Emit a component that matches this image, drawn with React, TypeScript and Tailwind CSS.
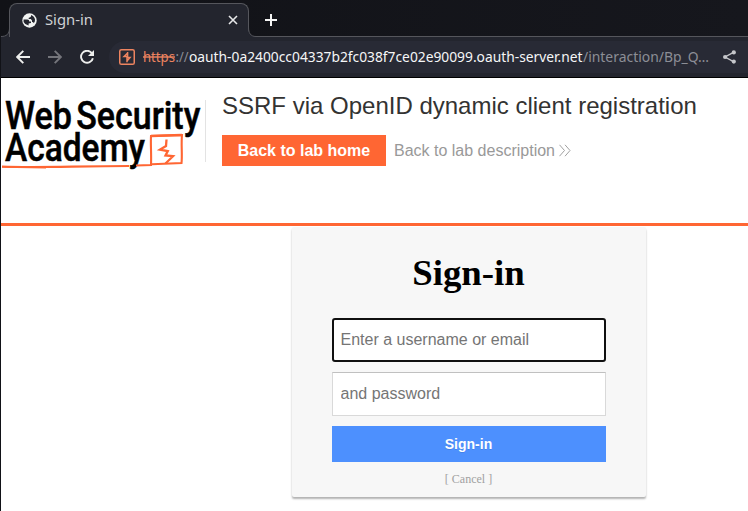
function TabStrip() {
  return (
    <div className="flex h-[37px] bg-linear-to-r from-[#111217] to-[#16171d]">
      <svg width="8" height="37" viewBox="0 0 8 37" className="shrink-0">
        <path d="M8 28.5 C8 33 6 36.5 0 36.5 V37 H8Z" fill="#23252e" />
        <path d="M0 36.5 C5.5 36.5 8.5 34 8.5 28" fill="none" stroke="#55565c" />
      </svg>
      <div className="mt-[3px] flex h-[34px] w-[240px] shrink-0 items-center rounded-t-[8px] border border-b-0 border-[#55565c] bg-[#23252e] pl-[12px] pr-[10px]">
        <svg width="15" height="15" viewBox="0 0 15 15" className="-mt-px">
          <circle cx="7.5" cy="7.5" r="7.2" fill="#f1f3f2" />
          <path d="M1.6 6.6 H5.4 Q7.4 6.8 7.3 8.6 H9 V10 L6.6 10.4 V12.4 Q3 12 1.6 9Z M9 2 V3 Q9 4.2 7.6 4.4 L6.4 5 L7 6 H8.8 L10 7.4 V9 Q11.4 8.9 11.8 10.2 Q13.2 8.6 13 6.6 Q12.4 3 9 2Z" fill="#23252e" />
        </svg>
        <span className="-mt-[4px] ml-[8px] grow font-['Noto_Sans',sans-serif] text-[14.8px] leading-[20px] text-[#d0d1d4]">Sign-in</span>
        <svg width="10" height="10" viewBox="0 0 10 10" stroke="#e7e8e9" strokeWidth="1.6" className="-mt-px">
          <path d="M1 1 L9 9 M9 1 L1 9" />
        </svg>
      </div>
      <div className="relative flex grow border-b border-[#55565c] pl-[16px] pt-[14px]">
        <svg width="8" height="10" viewBox="0 0 8 10" className="absolute -left-px top-[27px]">
          <path d="M0 0 C0 6 3 9.5 8 9.5 V10 H0Z" fill="#23252e" />
          <path d="M.5 0 C.5 6 2.5 9.5 8 9.5" fill="none" stroke="#55565c" />
        </svg>
        <svg width="12" height="12" viewBox="0 0 12 12" stroke="#f5f5f5" strokeWidth="2">
          <path d="M0 6H12M6 0V12" />
        </svg>
      </div>
    </div>
  );
}

function Toolbar() {
  return (
    <div className="flex h-[41px] items-center border-b border-black bg-[#23252e] pl-[15px]">
      <svg width="14" height="14" viewBox="0 0 14 14" fill="none" stroke="#eeefed" strokeWidth="1.9">
        <path d="M14 7H1.3M7.3 .8 L1.2 7 L7.3 13.2" />
      </svg>
      <svg width="14" height="14" viewBox="0 0 14 14" fill="none" stroke="#74757b" strokeWidth="1.9" className="ml-[18px]">
        <path d="M0 7H12.7M6.7 .8 L12.8 7 L6.7 13.2" />
      </svg>
      <svg width="14" height="14" viewBox="0 0 14 14" className="ml-[18px]">
        <path d="M11.8 3.1 A6 6 0 1 0 12.9 8.2" fill="none" stroke="#eeefed" strokeWidth="1.9" />
        <path d="M14 0V6H8Z" fill="#eeefed" />
      </svg>
      <div className="ml-[15px] flex h-[32px] grow items-center rounded-l-full bg-[#282a35] pl-[10px] pr-[12px]">
        <svg width="16" height="16" viewBox="0 0 16 16" fill="none" stroke="#ee8460">
          <rect x=".75" y=".75" width="14.5" height="14.5" rx="1.6" strokeWidth="1.5" />
          <path d="M8.6 3 V7.6 H5 L8.4 4.2 M8 13.2 V8.6 H11 L8.2 11.8" strokeWidth="1.5" />
        </svg>
        <div className="ml-[8px] flex grow whitespace-nowrap font-['Noto_Sans',sans-serif] text-[14px] leading-[20px]">
          <svg width="32" height="20" className="overflow-visible">
            <text x="0" y="15" textLength="32" lengthAdjust="spacingAndGlyphs" fill="#ee8460" className="line-through">https</text>
          </svg>
          <svg width="14" height="20" className="overflow-visible">
            <text x="0.5" y="15" textLength="13" lengthAdjust="spacingAndGlyphs" fill="#8c8e96">://</text>
          </svg>
          <svg width="394" height="20" className="overflow-visible">
            <text x="0" y="15" textLength="393.5" lengthAdjust="spacingAndGlyphs" fill="#f5f6f7">oauth-0a2400cc04337b2fc038f7ce02e90099.oauth-server.net</text>
          </svg>
          <svg width="126" height="20" className="overflow-visible">
            <text x="0" y="15" textLength="126" lengthAdjust="spacingAndGlyphs" fill="#8c8e96">/interaction/Bp_Q…</text>
          </svg>
        </div>
        <svg width="13" height="14" viewBox="0 0 13 14" fill="#c5c6ca">
          <path d="M11 2.2 L2 7 L11 11.8" fill="none" stroke="#c5c6ca" strokeWidth="1.4" />
          <circle cx="10.8" cy="2.4" r="2.1" />
          <circle cx="2.1" cy="7" r="2.1" />
          <circle cx="10.8" cy="11.6" r="2.1" />
        </svg>
      </div>
    </div>
  );
}

function AcademyLogo() {
  return (
    <svg width="204" height="72" viewBox="0 0 204 72" className="shrink-0 overflow-visible">
      <g className="font-[Roboto,sans-serif] font-medium" fontSize="38" fill="#000" stroke="#000" strokeWidth="0.5">
        <text x="4" y="28.6" textLength="67" lengthAdjust="spacingAndGlyphs">Web</text>
        <text x="75.3" y="28.6" textLength="124" lengthAdjust="spacingAndGlyphs">Security</text>
        <text x="4" y="61" textLength="140" lengthAdjust="spacingAndGlyphs">Academy</text>
      </g>
      <g fill="none" stroke="#ff6633" strokeWidth="2.1">
        <path d="M1 66.5 C35 68 75 66 128 66 M135 65.5 L150 65 C150.5 54 149.5 44 150 36 L181 35 C180 45 181.5 55 180.5 63 L151 64.2" />
        <path d="M1 67 L45 67.7" strokeWidth="1.5" />
        <path d="M150 36 L181 35" strokeWidth="2.6" />
        <path d="M165.5 39.5 L165 46 L159 49.6 L166.8 51 L164.5 55.5 L172 56.2 L164.5 63.5" strokeWidth="2.3" />
      </g>
    </svg>
  );
}

function LabHeader() {
  return (
    <header className="flex h-[148px] border-b-[3px] border-[#ff6633] pt-[22px] font-['Liberation_Sans',Arial,sans-serif]">
      <AcademyLogo />
      <div className="h-[62px] w-px shrink-0 bg-[#e3e3e3]" />
      <div className="-mt-[11px] ml-[16px]">
        <h2 className="mt-[3px] whitespace-nowrap text-[24px] leading-[28px] text-[#333332]">SSRF via OpenID dynamic client registration</h2>
        <div className="mt-[15px] flex items-center">
          <a className="flex h-[31px] w-[164px] items-center justify-center bg-[#ff6633] text-[16px] font-bold text-white">Back to lab home</a>
          <a className="ml-[8px] flex items-center whitespace-nowrap text-[16px] text-[#999]">
            Back to lab description
            <svg width="12" height="13" viewBox="0 0 12 13" fill="none" stroke="#a0a0a0" className="ml-[4px]">
              <path d="M.5 .8 L5.5 6.5 L.5 12.2 M6 .8 L11 6.5 L6 12.2" />
            </svg>
          </a>
        </div>
      </div>
    </header>
  );
}

function LoginCard() {
  return (
    <main className="ml-[291px] mt-px h-[270px] w-[354px] rounded-[2px] bg-[#f7f7f7] px-[40px] shadow-[0_2px_2px_rgba(0,0,0,0.3)]">
      <h1 className="-ml-px pt-[25px] text-center font-['Liberation_Serif',serif] text-[36.8px] font-bold leading-[42px] text-black">Sign-in</h1>
      <form className="mt-[24px] flex flex-col font-['Liberation_Sans',Arial,sans-serif]">
        <input placeholder="Enter a username or email" className="h-[44px] rounded-[3px] border-2 border-[#101010] bg-white px-[6.5px] text-[16px] outline-none placeholder:text-[#757575]" />
        <input type="password" placeholder="and password" className="mt-[10px] h-[44px] border border-[#d9d9d9] border-t-[#c0c0c0] bg-white px-[7.5px] text-[16px] outline-none placeholder:text-[#757575]" />
        <button type="button" className="mt-[10px] h-[36px] bg-[#4d90fe] pr-px text-[14px] font-bold text-white [text-shadow:0_1px_rgba(0,0,0,0.1)]">Sign-in</button>
      </form>
      <div className="-ml-px mt-[9px] text-center font-['Liberation_Serif',serif] text-[12px] leading-[16px] text-[#666] opacity-60">[ Cancel ]</div>
    </main>
  );
}

export default function App() {
  return (
    <div className="h-[511px] w-[748px] overflow-hidden border-l border-[#111217] bg-white">
      <TabStrip />
      <Toolbar />
      <LabHeader />
      <LoginCard />
    </div>
  );
}
